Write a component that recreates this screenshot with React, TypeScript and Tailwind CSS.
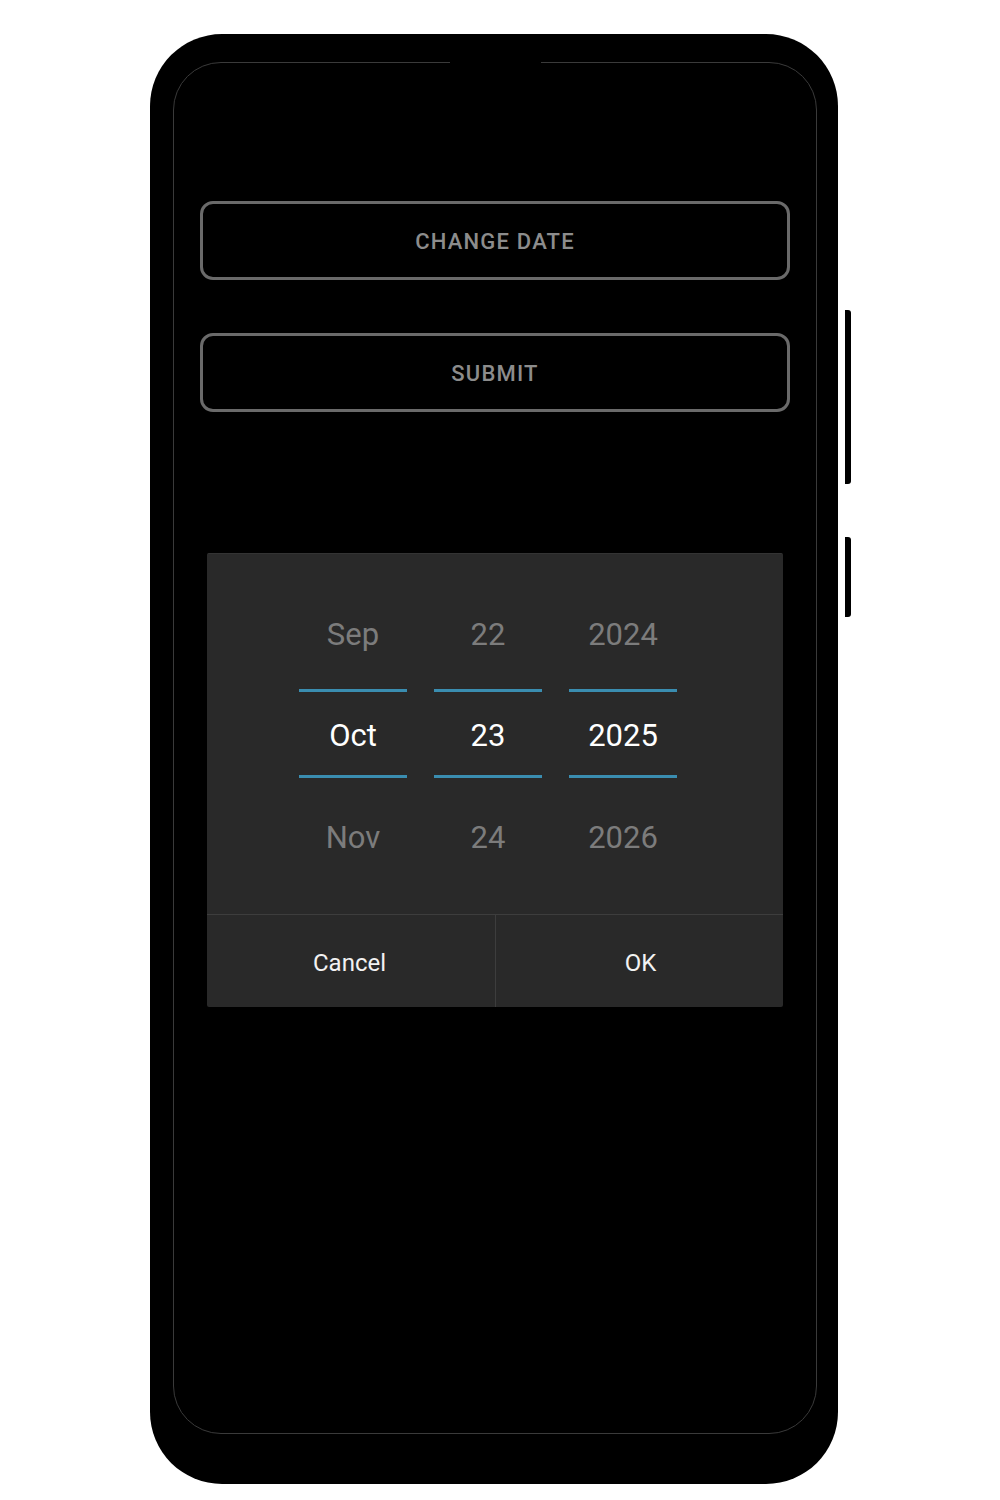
import React from "react";

const columns = [
  { prev: "Sep", cur: "Oct", next: "Nov" },
  { prev: "22", cur: "23", next: "24" },
  { prev: "2024", cur: "2025", next: "2026" },
];

function OutlineButton({ label }: { label: string }) {
  return (
    <button className="flex h-[79px] w-full items-center justify-center rounded-[13px] border-[3px] border-[#6a6a6a] bg-black pt-[2px] text-[22px] font-medium tracking-[1.2px] text-[#8c8c8c]">
      {label}
    </button>
  );
}

function PickerColumn({ prev, cur, next }: { prev: string; cur: string; next: string }) {
  return (
    <div className="flex w-[108px] flex-col items-stretch">
      <div className="flex h-[50px] items-center justify-center text-[31px] text-[#7c7c7c]">{prev}</div>
      <div className="mt-[29px] h-[3px] bg-[#3a8db0]" />
      <div className="flex h-[83px] items-center justify-center pt-[6px] text-[31px] text-white">{cur}</div>
      <div className="h-[3px] bg-[#3a8db0]" />
      <div className="mt-[34px] flex h-[50px] items-center justify-center pt-[2px] text-[31px] text-[#7c7c7c]">{next}</div>
    </div>
  );
}

export default function App() {
  return (
    <div
      className="h-[1500px] w-[1000px] bg-white pl-[150px] pt-[34px]"
      style={{ fontFamily: "Roboto, 'Noto Sans', sans-serif" }}
    >
      <div className="relative h-[1450px] w-[688px] rounded-[72px] bg-black pl-[23px] pt-[28px]">
        {/* side keys */}
        <div className="absolute left-[695px] top-[276px] h-[174px] w-[6px] rounded-r-[3px] bg-black" />
        <div className="absolute left-[695px] top-[503px] h-[80px] w-[6px] rounded-r-[3px] bg-black" />

        <div className="relative h-[1372px] w-[644px] rounded-[48px] border border-[#3a3a3a] bg-black px-[26px] pt-[138px]">
          {/* notch gap in the bezel line */}
          <div className="absolute left-[276px] top-[-2px] h-[4px] w-[91px] bg-black" />

          <div className="flex flex-col gap-[53px]">
            <OutlineButton label="CHANGE DATE" />
            <OutlineButton label="SUBMIT" />
          </div>

          <div className="mx-[7px] mt-[141px] overflow-hidden rounded-[2px] border-t border-[#333] bg-[#292929]">
            <div className="flex h-[360px] justify-center gap-[27px] pr-[14px] pt-[56px]">
              {columns.map((c) => (
                <PickerColumn key={c.cur} {...c} />
              ))}
            </div>
            <div className="flex h-[93px] border-t border-[#3d3d3d]">
              <div className="flex flex-1 items-center justify-center border-r border-[#3d3d3d] pr-[3px] pt-[3px] text-[24px] text-[#f2f2f2]">
                Cancel
              </div>
              <div className="flex flex-1 items-center justify-center pl-[2px] pt-[3px] text-[24px] text-[#f2f2f2]">OK</div>
            </div>
          </div>
        </div>
      </div>
    </div>
  );
}
